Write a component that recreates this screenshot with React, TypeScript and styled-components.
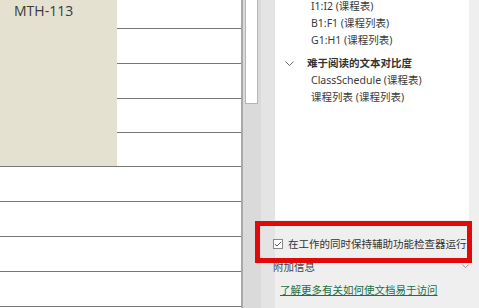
import React from 'react';
import styled, { createGlobalStyle } from 'styled-components';

const GlobalStyle = createGlobalStyle`
  html, body {
    margin: 0;
    padding: 0;
    background: #ffffff;
  }
  body {
    font-family: "Noto Sans", "Noto Sans CJK SC", sans-serif;
  }
`;

const Window = styled.div`
  width: 479px;
  height: 308px;
  display: flex;
  overflow: hidden;
  position: relative;
`;

const Sheet = styled.div`
  width: 241px;
  flex: none;
  display: grid;
  grid-template-columns: 117px 1fr;
  grid-template-rows: 29px 35px 35px 34px 34px repeat(4, 35px);
  border-right: 2px solid #a9a9a9;
  background: #ffffff;
`;

const MergedCell = styled.div`
  grid-column: 1;
  grid-row: 1 / span 5;
  background: #e5e1d1;
  border-bottom: 1px solid #777777;
  padding: 2px 0 0 14px;
  font-size: 14px;
  line-height: 18px;
  color: #3a3a3a;
  font-family: "Open Sans", "Noto Sans", sans-serif;
`;

const Cell = styled.div<{ $wide?: boolean }>`
  grid-column: ${(p) => (p.$wide ? '1 / span 2' : '2')};
  border-bottom: 1px solid #777777;
`;

const ScrollTrack = styled.div`
  width: 18px;
  flex: none;
  background: #dadada;
  padding: 0 3px 0 2px;
  box-sizing: border-box;
`;

const ScrollThumb = styled.div`
  height: 104px;
  background: #ffffff;
  border: 1px solid #b5b5b5;
  border-top: none;
  box-sizing: border-box;
`;

const Pane = styled.div`
  flex: 1;
  display: flex;
  flex-direction: column;
  background: #efefef;
  border-left: 14px solid #e4e4e4;
  font-size: 10.5px;
  color: #3b3b3b;
`;

const ListBox = styled.div`
  height: 220px;
  flex: none;
  background: #ffffff;
  margin-right: 10px;
  box-sizing: border-box;
  padding-top: 0;
`;

const Group = styled.div<{ $gap?: number }>`
  margin-top: ${(p) => p.$gap ?? 0}px;
`;

const Item = styled.div`
  height: 17px;
  line-height: 17px;
  padding-left: 36px;
  white-space: nowrap;
`;

const GroupHeader = styled.div`
  height: 17px;
  line-height: 17px;
  display: flex;
  align-items: center;
  gap: 13px;
  padding-left: 10px;
  font-weight: bold;
  color: #333333;
`;

const Footer = styled.div`
  flex: 1;
  display: flex;
  flex-direction: column;
  margin-left: -2px;
  padding: 17px 10px 0 0;
`;

const CheckRow = styled.label`
  position: relative;
  display: flex;
  align-items: center;
  gap: 5px;
  height: 13px;
  white-space: nowrap;
  color: #333333;
`;

const Box = styled.span`
  width: 10px;
  height: 10px;
  border: 1px solid #8a8a8a;
  background: #ffffff;
  box-sizing: border-box;
  display: flex;
  align-items: center;
  justify-content: center;
`;

const Highlight = styled.div`
  position: absolute;
  left: -18px;
  top: -16px;
  width: 217px;
  height: 42px;
  border: 5px solid #e00a0a;
  box-sizing: border-box;
  pointer-events: none;
`;

const SectionRow = styled.div`
  display: flex;
  align-items: center;
  justify-content: space-between;
  margin-top: 10px;
  height: 13px;
  color: #444444;
`;

const Link = styled.a`
  margin: 9px 0 0 7px;
  color: #1d7044;
  text-decoration: underline;
  white-space: nowrap;
`;

function Chevron({ size = 9, color = '#555' }: { size?: number; color?: string }) {
  return (
    <svg width={size} height={size / 2 + 1} viewBox="0 0 10 6">
      <polyline points="0.5,0.5 5,5 9.5,0.5" fill="none" stroke={color} strokeWidth="1" />
    </svg>
  );
}

export default function App() {
  return (
    <Window>
      <GlobalStyle />
      <Sheet>
        <MergedCell>MTH-113</MergedCell>
        <Cell />
        <Cell />
        <Cell />
        <Cell />
        <Cell />
        <Cell $wide />
        <Cell $wide />
        <Cell $wide />
        <Cell $wide />
      </Sheet>
      <ScrollTrack>
        <ScrollThumb />
      </ScrollTrack>
      <Pane>
        <ListBox>
          <Group $gap={-2}>
            <Item>I1:I2 (课程表)</Item>
            <Item>B1:F1 (课程列表)</Item>
            <Item>G1:H1 (课程列表)</Item>
          </Group>
          <Group $gap={6}>
            <GroupHeader>
              <Chevron />
              难于阅读的文本对比度
            </GroupHeader>
            <Item>ClassSchedule (课程表)</Item>
            <Item>课程列表 (课程列表)</Item>
          </Group>
        </ListBox>
        <Footer>
          <CheckRow>
            <Box>
              <svg width="8" height="6" viewBox="0 0 8 6">
                <polyline points="0.8,3 3,5 7.2,0.8" fill="none" stroke="#555" strokeWidth="1" />
              </svg>
            </Box>
            在工作的同时保持辅助功能检查器运行
            <Highlight />
          </CheckRow>
          <SectionRow>
            附加信息
            <Chevron size={7} color="#777" />
          </SectionRow>
          <Link>了解更多有关如何使文档易于访问</Link>
        </Footer>
      </Pane>
    </Window>
  );
}
